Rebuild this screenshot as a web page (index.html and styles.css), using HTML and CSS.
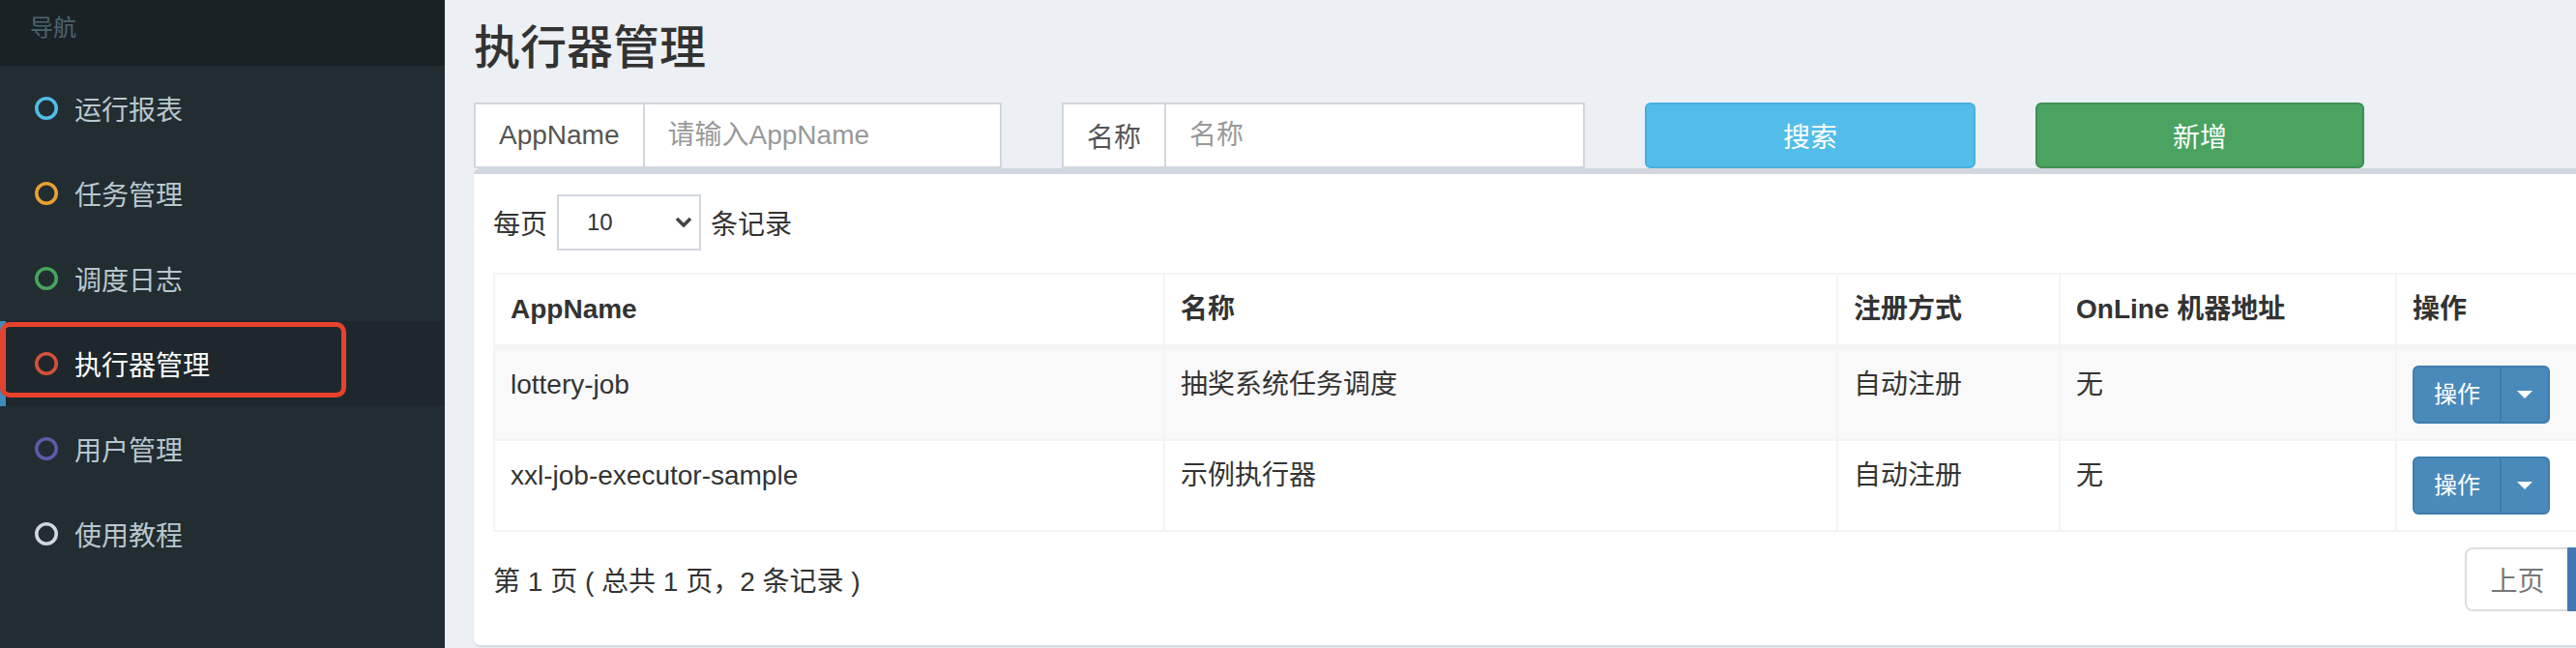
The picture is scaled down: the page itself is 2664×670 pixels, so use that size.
FILE: index.html
```html
<!DOCTYPE html>
<html lang="zh-CN">
<head>
<meta charset="utf-8">
<title>执行器管理</title>
<link rel="stylesheet" href="styles.css">
</head>
<body>
<div class="layout">
  <aside class="sidebar">
    <div class="nav-header">导航</div>
    <ul class="menu">
      <li class="menu-item"><svg class="dot c-aqua" viewBox="0 0 24 24"><circle cx="12" cy="12" r="10.2"/></svg><span>运行报表</span></li>
      <li class="menu-item"><svg class="dot c-yellow" viewBox="0 0 24 24"><circle cx="12" cy="12" r="10.2"/></svg><span>任务管理</span></li>
      <li class="menu-item"><svg class="dot c-green" viewBox="0 0 24 24"><circle cx="12" cy="12" r="10.2"/></svg><span>调度日志</span></li>
      <li class="menu-item active"><svg class="dot c-red" viewBox="0 0 24 24"><circle cx="12" cy="12" r="10.2"/></svg><span>执行器管理</span></li>
      <li class="menu-item"><svg class="dot c-purple" viewBox="0 0 24 24"><circle cx="12" cy="12" r="10.2"/></svg><span>用户管理</span></li>
      <li class="menu-item"><svg class="dot c-gray" viewBox="0 0 24 24"><circle cx="12" cy="12" r="10.2"/></svg><span>使用教程</span></li>
    </ul>
    <div class="annotation"></div>
  </aside>

  <main class="content">
    <h1 class="page-title">执行器管理</h1>

    <div class="search-row">
      <div class="input-group">
        <span class="addon">AppName</span>
        <input class="field" type="text" placeholder="请输入AppName">
      </div>
      <div class="input-group">
        <span class="addon">名称</span>
        <input class="field" type="text" placeholder="名称">
      </div>
      <button class="btn btn-search">搜索</button>
      <button class="btn btn-add">新增</button>
    </div>

    <section class="box">
      <div class="length">
        <span>每页</span>
        <div class="select">
          <span>10</span>
          <svg class="chev" viewBox="0 0 18 12"><path d="M2 2 L9 9 L16 2" /></svg>
        </div>
        <span>条记录</span>
      </div>

      <table class="grid">
        <colgroup>
          <col class="w-app">
          <col class="w-title">
          <col class="w-type">
          <col class="w-addr">
          <col>
        </colgroup>
        <thead>
          <tr>
            <th>AppName</th>
            <th>名称</th>
            <th>注册方式</th>
            <th>OnLine 机器地址</th>
            <th>操作</th>
          </tr>
        </thead>
        <tbody>
          <tr>
            <td>lottery-job</td>
            <td>抽奖系统任务调度</td>
            <td>自动注册</td>
            <td>无</td>
            <td><div class="btn-group"><button class="op-btn">操作</button><button class="op-caret"><span class="caret"></span></button></div></td>
          </tr>
          <tr>
            <td>xxl-job-executor-sample</td>
            <td>示例执行器</td>
            <td>自动注册</td>
            <td>无</td>
            <td><div class="btn-group"><button class="op-btn">操作</button><button class="op-caret"><span class="caret"></span></button></div></td>
          </tr>
        </tbody>
      </table>

      <div class="table-footer">
        <div class="info">第 1 页 ( 总共 1 页，2 条记录 )</div>
        <ul class="pagination">
          <li class="page">上页</li>
          <li class="page active">1</li>
          <li class="page">下页</li>
        </ul>
      </div>
    </section>
  </main>
</div>
</body>
</html>
```

FILE: styles.css
```css
* { box-sizing: border-box; }

html, body {
  margin: 0;
  padding: 0;
}

body {
  overflow: hidden;
  background: #ecf0f5;
  color: #333;
  font-family: "Liberation Sans", "Noto Sans CJK SC", sans-serif;
}

.layout {
  display: flex;
  width: 2880px;
  height: 670px;
}

/* ---------- sidebar ---------- */
.sidebar {
  position: relative;
  flex: 0 0 460px;
  background: #222d32;
  font-family: "Liberation Sans", "Noto Sans CJK SC", sans-serif;
}

.nav-header {
  height: 68px;
  padding: 12px 0 0 31px;
  background: #1a2226;
  color: #4b646f;
  font-size: 24px;
  line-height: 34px;
}

.menu {
  list-style: none;
  margin: 0;
  padding: 0;
}

.menu-item {
  display: flex;
  align-items: center;
  height: 88px;
  border-left: 6px solid transparent;
  padding-left: 30px;
  color: #b8c7ce;
  font-size: 28px;
}

.menu-item.active {
  background: #1e282c;
  border-left-color: #3c8dbc;
  color: #fff;
}

.dot {
  width: 24px;
  height: 24px;
  flex-shrink: 0;
  margin-right: 17px;
  fill: none;
  stroke: currentColor;
  stroke-width: 3.6;
}

.c-aqua { color: #50bee6; }
.c-yellow { color: #eba032; }
.c-green { color: #46a55a; }
.c-red { color: #d7503c; }
.c-purple { color: #5f5aaa; }
.c-gray { color: #d2d6de; }

.annotation {
  position: absolute;
  left: 0;
  top: 333px;
  width: 358px;
  height: 78px;
  border: 5px solid #e8412c;
  border-radius: 10px;
  pointer-events: none;
}

/* ---------- main content ---------- */
.content {
  flex: 0 0 2420px;
  padding: 23px 30px 0;
}

.page-title {
  margin: 0;
  font-size: 48px;
  line-height: 53px;
  font-weight: 500;
  color: #333;
}

.search-row {
  display: grid;
  grid-template-columns: 546px 541px 342px 340px;
  column-gap: 62px;
  height: 68px;
  margin-top: 30px;
}

.input-group {
  display: flex;
  height: 68px;
  border: 2px solid #d2d6de;
  background: #fff;
}

.addon {
  display: flex;
  align-items: center;
  padding: 0 24px;
  border-right: 2px solid #d2d6de;
  color: #555;
  font-size: 28px;
}

.field {
  flex: 1;
  min-width: 0;
  border: 0;
  outline: none;
  padding: 0 24px;
  font-family: inherit;
  font-size: 28px;
  color: #555;
  background: #fff;
}

.field::placeholder {
  color: #999;
}

.btn {
  height: 68px;
  border-radius: 6px;
  border: 2px solid transparent;
  color: #fff;
  font-family: inherit;
  font-size: 28px;
  padding: 0;
}

.btn-search {
  background: #53bde9;
  border-color: #47b1df;
}

.btn-add {
  background: #4aa361;
  border-color: #3f8f53;
}

/* ---------- box ---------- */
.box {
  width: 2359px;
  background: #fff;
  border-top: 6px solid #d2d6de;
  border-radius: 6px;
  box-shadow: 0 2px 2px rgba(0, 0, 0, 0.1);
  padding: 21px 20px 35px;
}

.length {
  display: flex;
  align-items: center;
  gap: 10px;
  height: 58px;
  font-size: 28px;
  color: #333;
}

.select {
  display: flex;
  align-items: center;
  width: 149px;
  height: 58px;
  border: 2px solid #d2d6de;
  padding: 0 7px 0 29px;
  font-size: 24px;
  color: #333;
}

.chev {
  width: 18px;
  height: 12px;
  margin-left: auto;
  fill: none;
  stroke: #444;
  stroke-width: 3.6;
}

.grid {
  width: 100%;
  margin-top: 23px;
  table-layout: fixed;
  border-collapse: separate;
  border-spacing: 0;
  border: 2px solid #f4f4f4;
  font-size: 28px;
  line-height: 40px;
  color: #333;
}

.w-app { width: 693px; }
.w-title { width: 696px; }
.w-type { width: 230px; }
.w-addr { width: 348px; }

.grid th,
.grid td {
  padding: 16px;
  text-align: left;
  vertical-align: top;
  border-right: 2px solid #f4f4f4;
  white-space: nowrap;
}

.grid th:last-child,
.grid td:last-child {
  border-right: 0;
}

.grid th {
  font-weight: bold;
  border-bottom: 4px solid #f4f4f4;
}

.grid td {
  border-top: 2px solid #f4f4f4;
}

.grid tbody tr:nth-child(odd) {
  background: #f9f9f9;
}

.btn-group {
  display: inline-flex;
  height: 60px;
}

.op-btn,
.op-caret {
  height: 60px;
  background: #4a8aba;
  border: 2px solid #3e7dae;
  color: #fff;
  font-family: inherit;
  font-size: 24px;
  line-height: 36px;
}

.op-btn {
  width: 92px;
  padding: 0;
  border-radius: 6px 0 0 6px;
}

.op-caret {
  width: 52px;
  margin-left: -2px;
  padding: 0;
  border-radius: 0 6px 6px 0;
  display: flex;
  align-items: center;
  justify-content: center;
}

.caret {
  width: 0;
  height: 0;
  border-top: 8px solid #fff;
  border-left: 8px solid transparent;
  border-right: 8px solid transparent;
}

.table-footer {
  display: flex;
  align-items: center;
  justify-content: space-between;
  margin-top: 16px;
}

.info {
  font-size: 28px;
  color: #333;
}

.pagination {
  display: flex;
  list-style: none;
  margin: 0;
  padding: 0;
}

.page {
  display: flex;
  align-items: center;
  height: 66px;
  padding: 0 24px;
  border: 2px solid #ddd;
  background: #fff;
  color: #777;
  font-size: 28px;
}

.page + .page {
  margin-left: -2px;
}

.page:first-child {
  border-radius: 8px 0 0 8px;
}

.page:last-child {
  border-radius: 0 8px 8px 0;
}

.page.active {
  background: #4279b5;
  border-color: #4279b5;
  color: #fff;
}
```
